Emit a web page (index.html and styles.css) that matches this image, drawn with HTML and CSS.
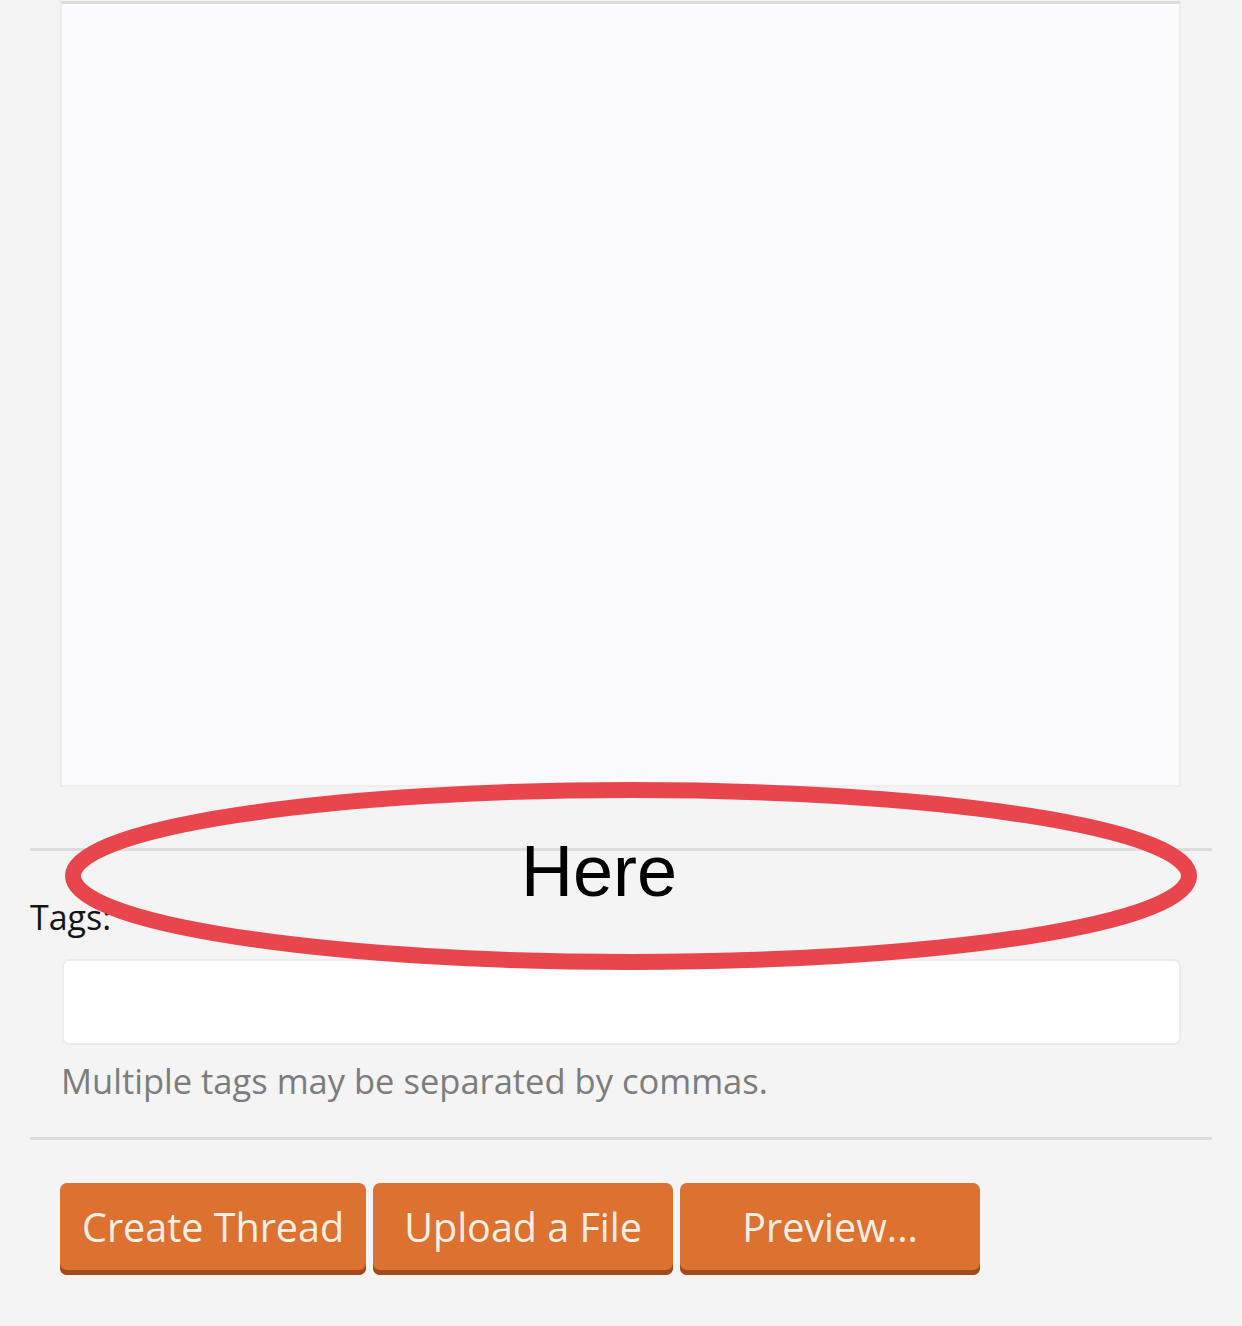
FILE: index.html
```html
<!DOCTYPE html>
<html lang="en">

<head>
    <meta charset="UTF-8">
    <meta name="viewport" content="width=device-width, initial-scale=1.0">
    <title>Post New Thread</title>
    <link rel="stylesheet" href="styles.css">
</head>

<body>
    <form class="thread-form">
        <!-- message body -->
        <div class="row editor-row">
            <div class="editor"></div>
        </div>

        <div class="rule"></div>

        <!-- tags -->
        <div class="row tags-row">
            <label class="label" for="tags">Tags:</label>
            <div class="field">
                <input type="text" id="tags" class="text-input">
                <p class="hint">Multiple tags may be separated by commas.</p>
            </div>
        </div>

        <div class="rule"></div>

        <!-- submit -->
        <div class="buttons">
            <button type="button" class="btn">Create Thread</button>
            <button type="button" class="btn">Upload a File</button>
            <button type="button" class="btn">Preview...</button>
        </div>
    </form>

    <!-- marker drawn on top -->
    <div class="callout">
        <svg class="ring" width="1242" height="200" viewBox="0 0 1242 200">
            <ellipse cx="631" cy="94" rx="558" ry="86" fill="none" stroke="#e8464c" stroke-width="16"/>
        </svg>
        <span class="callout-text">Here</span>
    </div>
</body>

</html>
```

FILE: styles.css
```css
body {
    margin: 0;
    background-color: #f4f4f4;
    font-family: "Open Sans", "Noto Sans", sans-serif;
    color: #141414;
}

.thread-form {
    padding: 0 30px;
}

.editor-row {
    padding-left: 30px;
    padding-right: 31px;
}

.editor {
    height: 781px;
    margin-top: 1px;
    background-color: #fbfbfd;
    border: 2px solid #ececec;
    border-top: 3px solid #dcdcdc;
    border-bottom-color: #efefef;
}

.rule {
    height: 3px;
    background-color: #dcdcdc;
}

.editor-row + .rule {
    margin-top: 61px;
}

.tags-row {
    padding-top: 46px;
}

.label {
    display: block;
    font-size: 34px;
    line-height: 40px;
    color: #141414;
}

.field {
    padding-left: 32px;
    padding-right: 31px;
    padding-top: 22px;
}

.text-input {
    display: block;
    box-sizing: border-box;
    width: 100%;
    height: 86px;
    margin: 0;
    background-color: #fff;
    border: 2px solid #ececec;
    border-radius: 7px;
    outline: none;
}

.hint {
    margin: 14px 0 0 -1px;
    font-size: 34.5px;
    line-height: 44px;
    color: #7c7c7c;
}

.tags-row + .rule {
    margin-top: 34px;
}

.buttons {
    display: flex;
    gap: 7px;
    padding: 43px 0 0 30px;
}

.btn {
    min-width: 300px;
    height: 92px;
    padding: 0 22px 4px;
    font-family: inherit;
    font-size: 39.5px;
    color: #fbeee2;
    background-color: #dd7130;
    border: none;
    border-radius: 7px;
    box-shadow: inset 0 -5px 0 #a5481a;
    cursor: pointer;
}

.btn:hover {
    background-color: #e07a3b;
}

/* red marker ring */
.callout {
    position: absolute;
    left: 0;
    top: 782px;
    width: 1242px;
    height: 200px;
}

.ring {
    display: block;
}

.callout-text {
    position: absolute;
    left: 521px;
    top: 44px;
    font-family: "Liberation Sans", Arial, sans-serif;
    font-size: 72px;
    line-height: 90px;
    color: #000;
}
```
